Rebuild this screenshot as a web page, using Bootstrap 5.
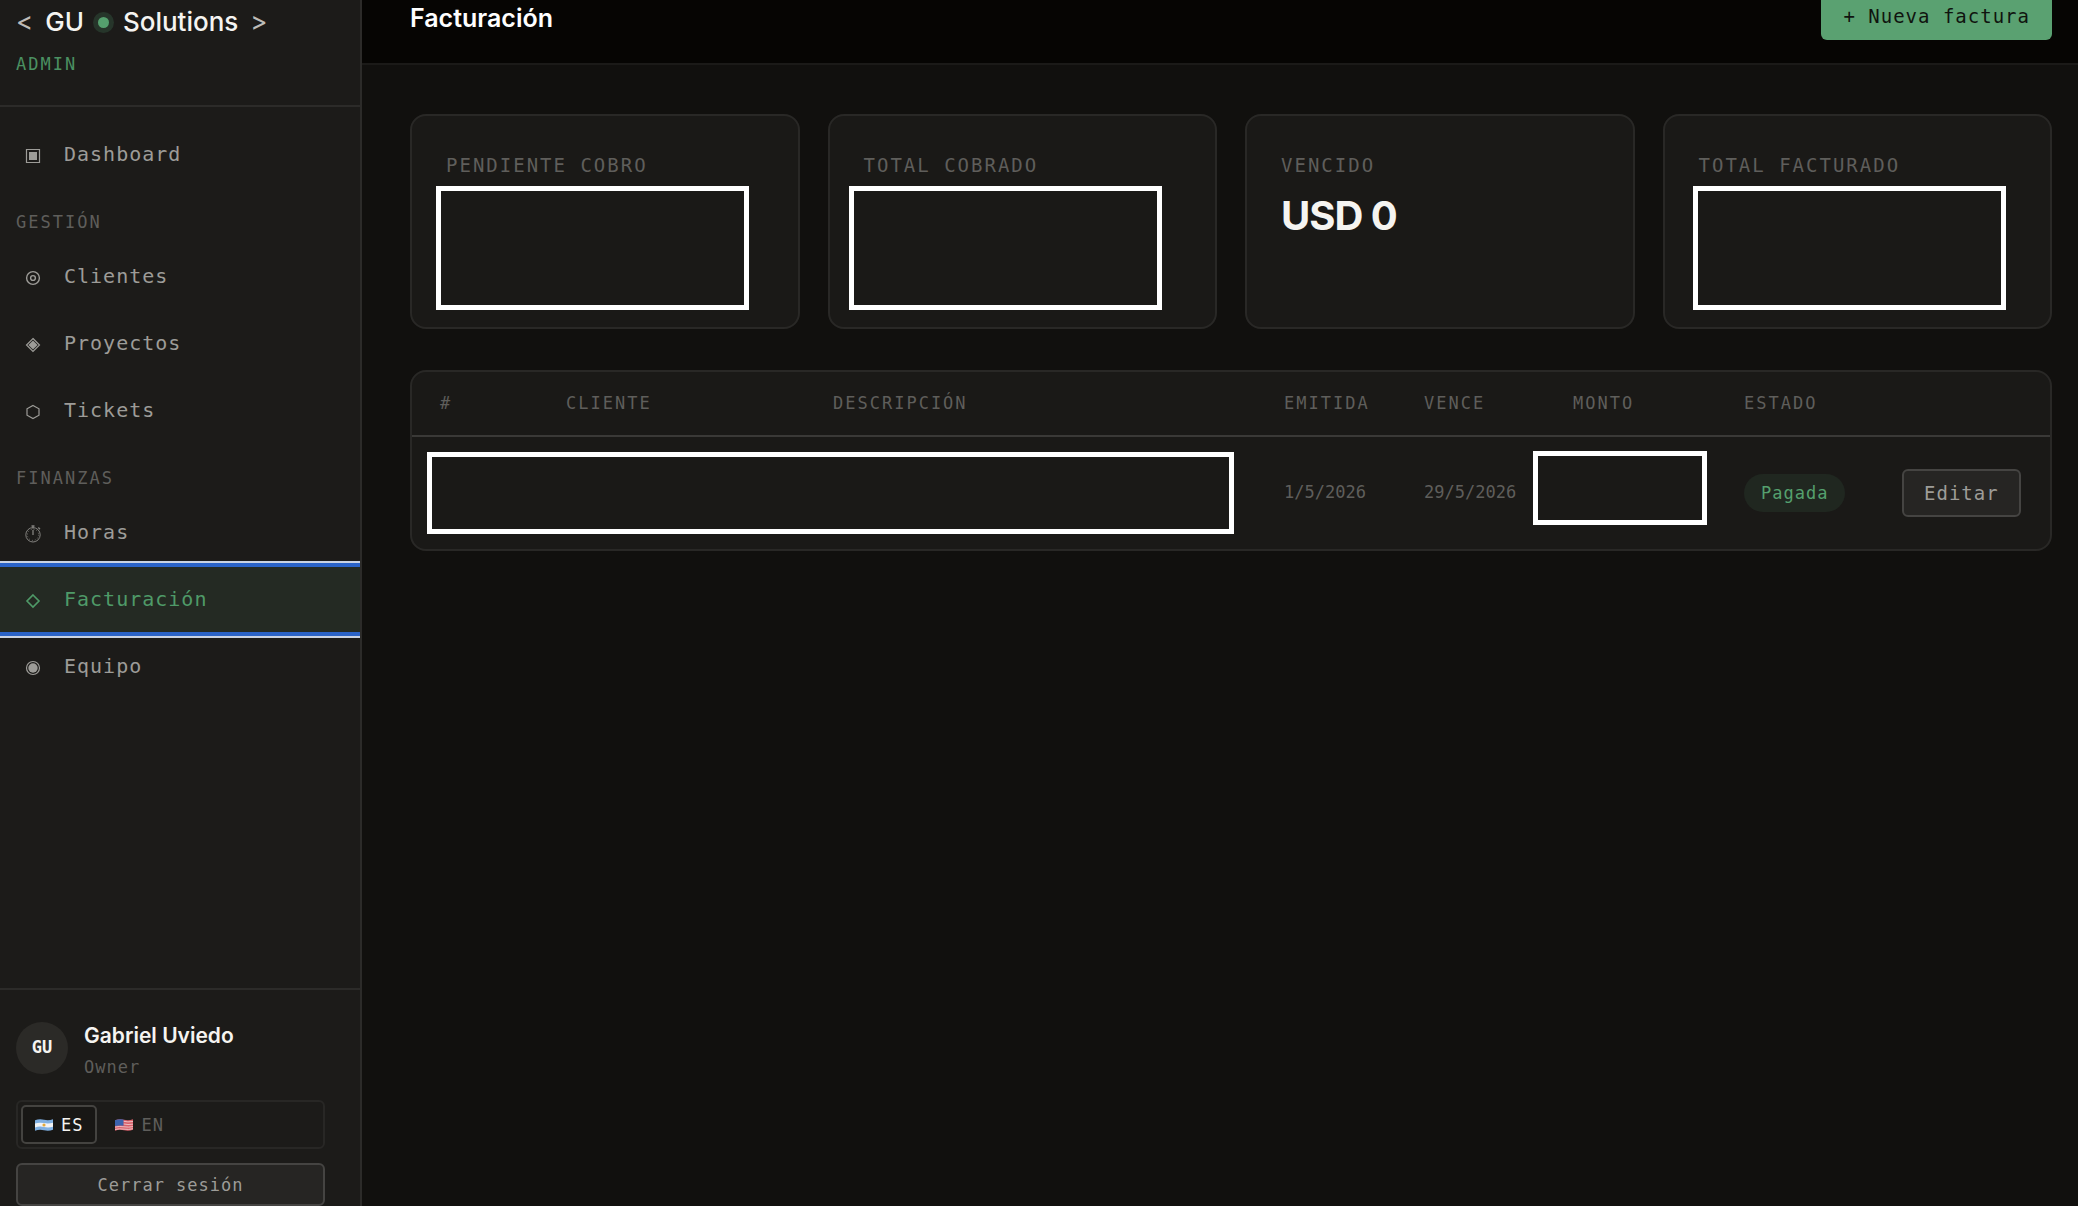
<!DOCTYPE html>
<html lang="es" data-bs-theme="dark">
<head>
<meta charset="utf-8">
<meta name="viewport" content="width=device-width, initial-scale=1">
<title>Facturación · GU Solutions</title>
<link rel="stylesheet" href="https://cdn.jsdelivr.net/npm/bootstrap@5.3.0/dist/css/bootstrap.min.css">
<style>
:root{--ink:#f5f4f1;--soft:#9d9c98;--dim:#5f5e5b;--line:#2c2b29;--line-strong:#454442;--panel:#1a1917;--side:#1c1b19;--green:#55a06e}
body{background:#11100e;color:var(--ink);font-family:Inter,"Liberation Sans",sans-serif}
.mono{font-family:"DejaVu Sans Mono","Liberation Mono",monospace}
.sidebar{width:362px;background:var(--side);border-right:2px solid var(--line);overflow:hidden}
.brand{height:107px;padding:5px 16px 0;border-bottom:2px solid var(--line)}
.brand-name{font-size:26px;line-height:34px;font-weight:500}
.brand-name .angle{color:#bdbcb8;font-weight:400}
.brand-dot{width:11px;height:11px;margin:0 14px;background:var(--green);box-shadow:0 0 0 5px #26352a}
.brand .tag{margin-top:14px}
.tag{font-size:17px;line-height:22px;letter-spacing:2px}
.tag-green{color:#4b9162}
.side-nav{padding-top:14px}
.side-nav .nav-link{height:65px;margin:1px 0;padding:0 16px 1px 24px;gap:22px;font-size:20px;letter-spacing:1px;color:var(--soft)}
.side-nav .nav-link svg{width:18px;height:18px;margin-top:3px;flex:none}
.side-nav .nav-link.active{color:#4f9a68;background:#242a23;box-shadow:0 0 0 4px #2a63c8,0 0 0 6px #c9d3e4;z-index:1;position:relative}
.side-label{height:55px;padding:23px 16px 0;color:var(--dim)}
.side-foot{border-top:2px solid var(--line);padding:32px 35px 0 16px}
.avatar{width:52px;height:52px;background:#2b2a27;font-size:17px;font-weight:700}
.person{font-size:21px;line-height:28px;font-weight:600}
.person-role{margin-top:6px}
.small-mono{font-size:17px;line-height:22px;letter-spacing:1px}
.dim{color:var(--dim)}
.lang{border:2px solid #282725;border-radius:6px;padding:3px;margin-top:22px;gap:4px}
.lang .btn{height:39px;padding:0 12px;border:2px solid transparent;border-radius:5px;gap:8px;color:var(--dim)}
.lang .btn.active{color:var(--ink);background:#181715;border-color:#444340}
.flag{width:18px;height:14px}
.btn-quiet{background:#262523;border:2px solid var(--line-strong);color:var(--soft);border-radius:6px}
.btn-quiet:hover{background:#2e2d2b;color:var(--ink)}
.btn-exit{height:43px;margin-top:14px;padding:0}
.btn-19{font-size:19px;line-height:24px;letter-spacing:1px;height:48px;padding:0 20px}
.btn-new{background:#5aa171;color:#10140f;border:0;border-radius:6px;padding:0 22px}
.topbar{background:#060503;border-bottom:2px solid #1b1a18;margin-top:-32px;padding:24px 26px 23px 48px}
.page-title{font-size:25px;line-height:32px;font-weight:600;padding-top:3px}
.content-area{padding:49px 26px 0 48px}
.stats{gap:28px}
.stat{flex:1 1 0;height:215px;background:var(--panel);border:2px solid #292826;border-radius:16px;padding:37px 34px 0}
.stat-label{font-size:19px;line-height:24px;letter-spacing:2px;color:var(--dim)}
.stat-value{font-size:40px;line-height:48px;font-weight:700;letter-spacing:-1px;margin-top:15px}
.redacted{border:5px solid #fff;background:#1a1917}
.stat .redacted{position:absolute;top:70px;left:24px;width:313px;height:124px}
.stat .shift-l{left:19px}
.stat .shift-r{left:28px}
.panel-table{margin-top:41px;background:var(--panel);border:2px solid #292826;border-radius:16px;overflow:hidden}
.invoices{table-layout:fixed;--bs-table-bg:transparent}
.invoices th{height:64px;padding:0 0 0 28px;font-size:17px;font-weight:400;letter-spacing:2px;color:var(--dim);border-bottom:2px solid #3a3937}
.invoices td{height:112px;padding:0 0 0 28px;border:0;vertical-align:middle;font-size:17px;color:var(--dim)}
.invoices td.cell-wide{padding:15px 22px 15px 15px;vertical-align:top}
.invoices td.cell-sum{padding:14px 9px 0 0;vertical-align:top}
.invoices th.head-sum{padding-left:40px}
.cell-wide .redacted{height:82px}.cell-sum .redacted{height:74px}
.w-num{width:126px}.w-cli{width:267px}.w-iss{width:140px}.w-due{width:137px}.w-sum{width:183px}.w-sta{width:158px}.w-act{width:176px}
.pill{display:inline-block;background:#202720;color:var(--green);line-height:38px;padding:0 17px;border-radius:19px;letter-spacing:1px}
</style>
<script defer src="https://cdn.jsdelivr.net/npm/bootstrap@5.3.0/dist/js/bootstrap.bundle.min.js"></script>
</head>
<body class="overflow-hidden">
<div class="d-flex vh-100">
  <aside class="sidebar d-flex flex-column flex-shrink-0 vh-100">
    <div class="brand">
      <div class="brand-name d-flex align-items-center">
        <span class="angle me-2 pe-1">&lt;</span><span>GU</span>
        <span class="brand-dot rounded-circle"></span>
        <span>Solutions</span><span class="angle ms-2 ps-1">&gt;</span>
      </div>
      <div class="tag tag-green mono">ADMIN</div>
    </div>
    <nav class="side-nav mono nav flex-column flex-nowrap" aria-label="Principal">
      <a class="nav-link d-flex align-items-center" href="#">
        <svg viewBox="0 0 18 18"><path d="M2.5 2.5h13v13h-13z" fill="none" stroke="currentColor" stroke-width="1.2"/><path d="M5 5h8v8H5z" fill="currentColor"/></svg>Dashboard</a>
      <div class="side-label tag">GESTIÓN</div>
      <a class="nav-link d-flex align-items-center" href="#">
        <svg viewBox="0 0 18 18" fill="none" stroke="currentColor" stroke-width="1.4"><circle cx="9" cy="9" r="6.4"/><circle cx="9" cy="9" r="2.4"/></svg>Clientes</a>
      <a class="nav-link d-flex align-items-center" href="#">
        <svg viewBox="0 0 18 18"><path d="M9 2.5 15.5 9 9 15.5 2.5 9z" fill="none" stroke="currentColor" stroke-width="1.2"/><path d="M9 4.4 13.6 9 9 13.6 4.4 9z" fill="currentColor"/></svg>Proyectos</a>
      <a class="nav-link d-flex align-items-center" href="#">
        <svg viewBox="0 0 18 18"><path d="M9 2.5 15 5.8v6.4L9 15.5 3 12.2V5.8z" fill="none" stroke="currentColor" stroke-width="1.2"/></svg>Tickets</a>
      <div class="side-label tag">FINANZAS</div>
      <a class="nav-link d-flex align-items-center" href="#">
        <svg viewBox="0 0 18 18" fill="none" stroke="currentColor" stroke-width="1" opacity=".8"><circle cx="9" cy="9.8" r="7.2"/><path d="M7.5 1h3M9 1v2.5M14.3 2.5l1.7 1.7M9 5v5" stroke-width="1.3"/><circle cx="9" cy="9.8" r="5.6" stroke-dasharray=".8 2.13"/></svg>Horas</a>
      <a class="nav-link active d-flex align-items-center" href="#" aria-current="page">
        <svg viewBox="0 0 18 18"><path d="M9 3 15 9 9 15 3 9z" fill="none" stroke="currentColor" stroke-width="1.6"/></svg>Facturación</a>
      <a class="nav-link d-flex align-items-center" href="#">
        <svg viewBox="0 0 18 18"><circle cx="9" cy="9" r="6.5" fill="none" stroke="currentColor" stroke-width="1.2"/><circle cx="9" cy="9" r="4.7" fill="currentColor"/></svg>Equipo</a>
    </nav>
    <div class="side-foot mt-auto">
      <div class="d-flex align-items-start">
        <div class="avatar mono rounded-circle d-flex align-items-center justify-content-center">GU</div>
        <div class="ms-3">
          <div class="person">Gabriel Uviedo</div>
          <div class="person-role small-mono mono dim">Owner</div>
        </div>
      </div>
      <div class="lang d-flex" role="group" aria-label="Idioma">
        <button type="button" class="btn active small-mono mono d-flex align-items-center" aria-pressed="true">
          <svg class="flag" viewBox="0 0 17 13"><path d="M0 2Q4 .5 8.5 1.5T17 1v10Q13 12.5 8.5 11.5T0 12z" fill="#7fb0e2"/><path d="M0 5Q4 3.8 8.5 4.7T17 4.3v3.800Q13 9.3 8.5 8.4T0 8.8z" fill="#f1f3f5"/><circle cx="8.5" cy="6.5" r="1.500" fill="#e2a93b"/></svg>ES</button>
        <button type="button" class="btn small-mono mono d-flex align-items-center" aria-pressed="false">
          <svg class="flag" viewBox="0 0 17 13"><path d="M0 2Q4 .5 8.5 1.5T17 1v10Q13 12.5 8.5 11.5T0 12z" fill="#d9606a"/><path d="M8 3q4 1 9 .2M8 5.5q4 1 9 .2M0 8.5q4-1 8.5-.3T17 8M0 10.7q4-1 8.5-.3T17 10" fill="none" stroke="#eec5c8" stroke-width=".9"/><path d="M0 2Q4 .5 8 1.4v5.800Q4 6.5 0 7.5z" fill="#3b62ad"/></svg>EN</button>
      </div>
      <button type="button" class="btn btn-quiet btn-exit small-mono mono w-100">Cerrar sesión</button>
    </div>
  </aside>
  <main class="flex-grow-1">
    <header class="topbar d-flex align-items-center justify-content-between">
      <h1 class="page-title mb-0">Facturación</h1>
      <button type="button" class="btn btn-new btn-19 mono">+ Nueva factura</button>
    </header>
    <div class="content-area">
      <section class="stats d-flex">
        <div class="stat position-relative"><div class="stat-label mono">PENDIENTE COBRO</div><div class="redacted"></div></div>
        <div class="stat position-relative"><div class="stat-label mono">TOTAL COBRADO</div><div class="redacted shift-l"></div></div>
        <div class="stat"><div class="stat-label mono">VENCIDO</div><div class="stat-value">USD 0</div></div>
        <div class="stat position-relative"><div class="stat-label mono">TOTAL FACTURADO</div><div class="redacted shift-r"></div></div>
      </section>
      <section class="panel-table">
        <table class="table invoices mono mb-0">
          <colgroup><col class="w-num"><col class="w-cli"><col><col class="w-iss"><col class="w-due"><col class="w-sum"><col class="w-sta"><col class="w-act"></colgroup>
          <thead><tr class="align-middle"><th>#</th><th>CLIENTE</th><th>DESCRIPCIÓN</th><th>EMITIDA</th><th>VENCE</th><th class="head-sum">MONTO</th><th>ESTADO</th><th></th></tr></thead>
          <tbody><tr>
            <td colspan="3" class="cell-wide"><div class="redacted"></div></td>
            <td>1/5/2026</td><td>29/5/2026</td>
            <td class="cell-sum"><div class="redacted"></div></td>
            <td><span class="pill">Pagada</span></td>
            <td><button type="button" class="btn btn-quiet btn-19">Editar</button></td>
          </tr></tbody>
        </table>
      </section>
    </div>
  </main>
</div>
</body>
</html>
